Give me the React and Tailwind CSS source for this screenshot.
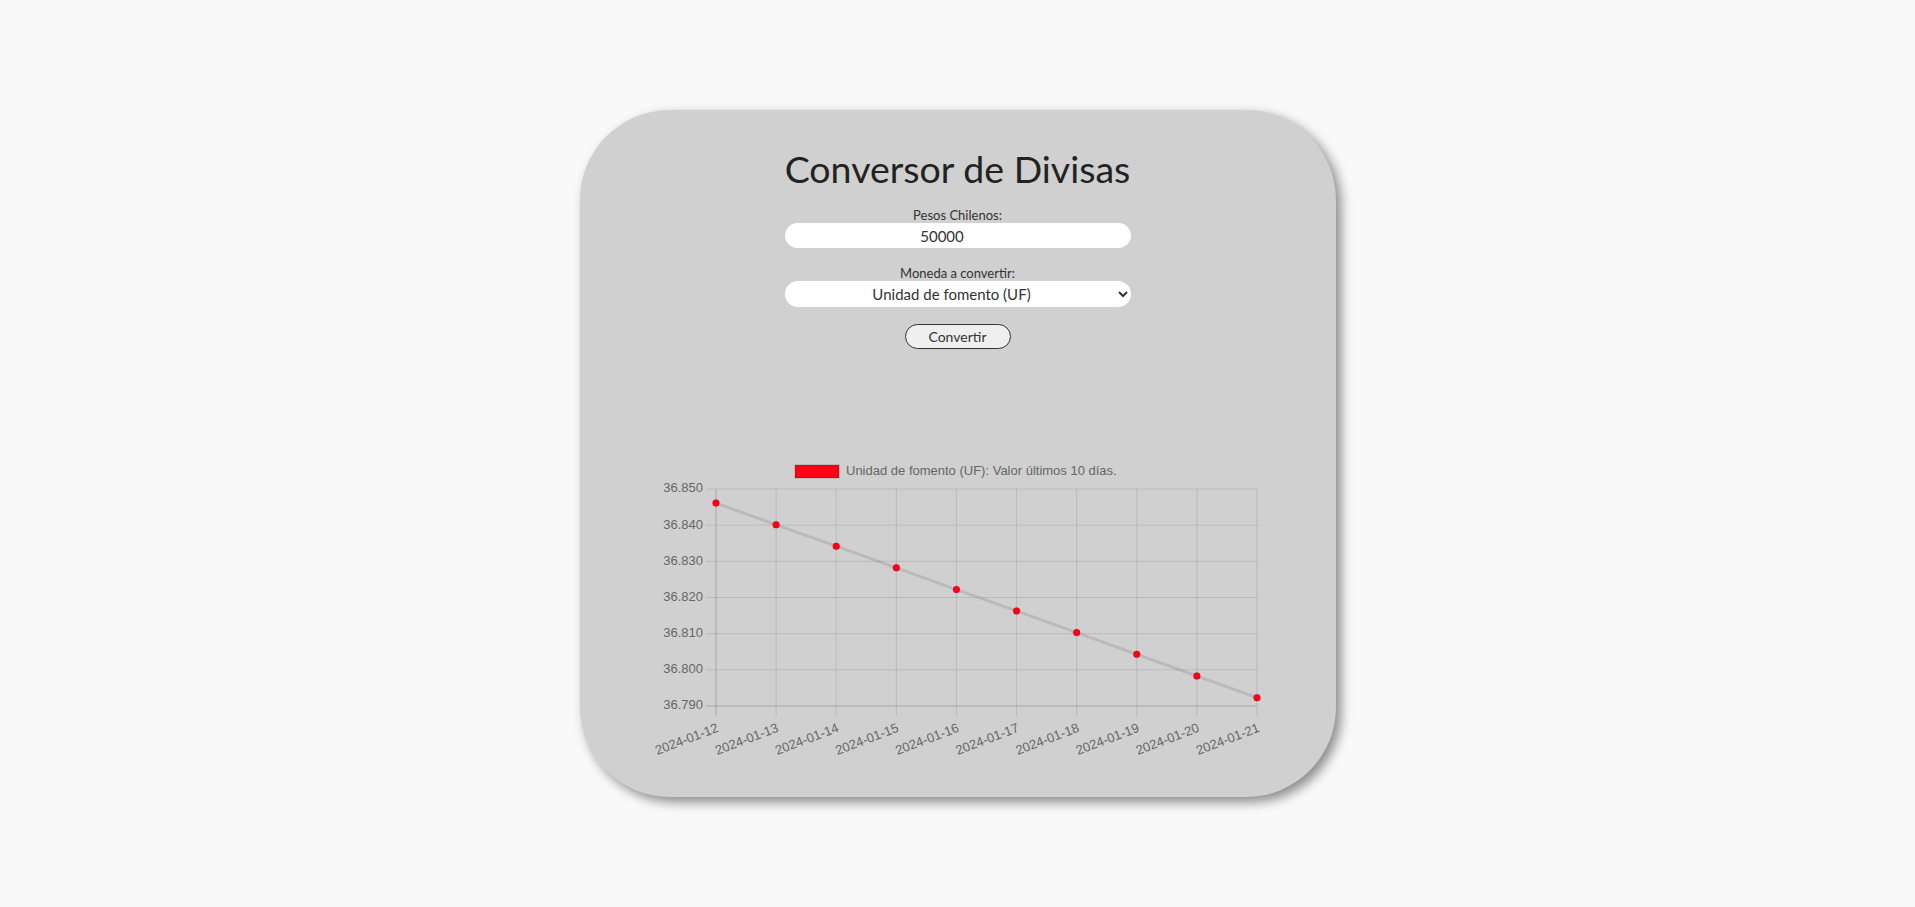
import React from 'react';

const values = [36.8461, 36.8401, 36.8342, 36.8282, 36.8222, 36.8163, 36.8103, 36.8043, 36.7983, 36.7923];
const dates = [
  '2024-01-12', '2024-01-13', '2024-01-14', '2024-01-15', '2024-01-16',
  '2024-01-17', '2024-01-18', '2024-01-19', '2024-01-20', '2024-01-21',
];
const ticks = [36.85, 36.84, 36.83, 36.82, 36.81, 36.8, 36.79];

// plot box inside the svg
const L = 78;
const R = 619;
const T = 34;
const B = 251;
const xAt = (i) => L + (i * (R - L)) / 9;
const yAt = (v) => T + ((36.85 - v) / 0.06) * (B - T);

const Chart = () => {
  const path = values.map((v, i) => `${i ? 'L' : 'M'}${xAt(i)},${yAt(v)}`).join(' ');
  return (
    <svg width="640" height="305" viewBox="0 0 640 305" fontFamily="'Liberation Sans', Arial, sans-serif" fontSize="13" className="mt-[106px] block">
      {/* legend */}
      <rect x="157" y="10" width="44" height="13" fill="#ff0019" stroke="rgba(0,0,0,0.1)" strokeWidth="2" />
      <text x="208" y="17" fill="#666" dominantBaseline="middle">
        Unidad de fomento (UF): Valor últimos 10 días.
      </text>

      {/* horizontal grid + y labels */}
      {ticks.map((t, i) => (
        <g key={t}>
          <line x1={L - 10} x2={R} y1={yAt(t)} y2={yAt(t)} stroke={i === ticks.length - 1 ? 'rgba(0,0,0,0.2)' : 'rgba(0,0,0,0.1)'} strokeWidth="1" />
          <text x={L - 13} y={yAt(t)} fill="#666" textAnchor="end" dominantBaseline="middle">
            {t.toFixed(3)}
          </text>
        </g>
      ))}

      {/* vertical grid + x labels */}
      {dates.map((d, i) => (
        <g key={d}>
          <line x1={xAt(i)} x2={xAt(i)} y1={T} y2={B + 10} stroke={i === 0 ? 'rgba(0,0,0,0.2)' : 'rgba(0,0,0,0.1)'} strokeWidth="1" />
          <text
            transform={`translate(${xAt(i) + 2},${B + 22}) rotate(-21)`}
            fill="#666"
            textAnchor="end"
            dominantBaseline="middle"
          >
            {d}
          </text>
        </g>
      ))}

      <path d={path} fill="none" stroke="rgba(0,0,0,0.1)" strokeWidth="3" />
      {values.map((v, i) => (
        <circle key={i} cx={xAt(i)} cy={yAt(v)} r="3.5" fill="#ff0019" stroke="rgba(0,0,0,0.1)" strokeWidth="1" />
      ))}
    </svg>
  );
};

export default function App() {
  return (
    <div className="min-h-screen bg-[#f9f9f9] flex justify-center pt-[110px] font-['Lato',sans-serif]">
      <div className="w-[756px] h-[687px] rounded-[90px] bg-[#d0d0d0] shadow-[5px_5px_12px_rgba(0,0,0,0.45)] flex flex-col items-center pt-[36px]">
        <h1 className="text-[37.5px] leading-[46px] text-[#222]">Conversor de Divisas</h1>

        <label htmlFor="pesos" className="mt-[15px] block text-[13px] leading-[16px] text-[#333]">
          Pesos Chilenos:
        </label>
        <input
          id="pesos"
          type="number"
          defaultValue="50000"
          className="w-[346px] h-[25px] rounded-full bg-white pr-[16px] text-center text-[15px] text-[#333] outline-none"
        />

        <label htmlFor="moneda" className="mt-[17px] block text-[13px] leading-[16px] text-[#333]">
          Moneda a convertir:
        </label>
        <select
          id="moneda"
          defaultValue="uf"
          className="w-[346px] h-[26px] rounded-full bg-white text-center [text-align-last:center] text-[15px] text-[#333] outline-none"
        >
          <option value="uf">Unidad de fomento (UF)</option>
          <option value="dolar">Dólar</option>
          <option value="euro">Euro</option>
        </select>

        <button className="mt-[17px] w-[106px] h-[25px] rounded-full border border-[#333] bg-[#efefef] text-[14px] text-[#333]">
          Convertir
        </button>

        <Chart />
      </div>
    </div>
  );
}
